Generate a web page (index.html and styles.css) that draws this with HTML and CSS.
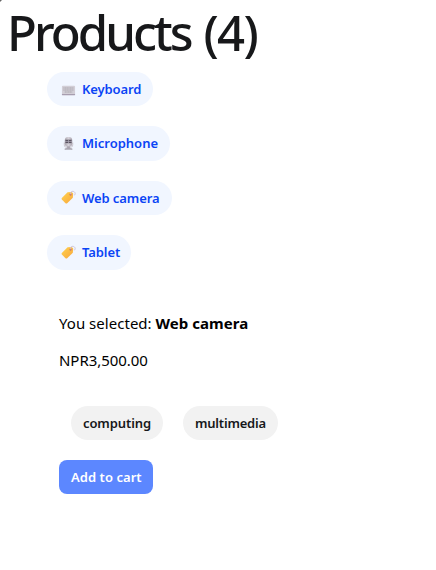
FILE: index.html
```
<!DOCTYPE html>
<html lang="en">
<head>
<meta charset="utf-8">
<title>Products</title>
<link rel="stylesheet" href="styles.css">
</head>
<body>
<span class="corner"></span>
<svg class="defs" width="0" height="0" aria-hidden="true">
  <defs>
    <linearGradient id="gold" x1="0" y1="0" x2="1" y2="1"><stop offset="0" stop-color="#ffd34f"/><stop offset="1" stop-color="#f8a63c"/></linearGradient>
    <linearGradient id="silver" x1="0" y1="0" x2="1" y2="0"><stop offset="0" stop-color="#aaa5ae"/><stop offset=".5" stop-color="#d5d1d9"/><stop offset="1" stop-color="#aaa4af"/></linearGradient>
    <symbol id="tag" viewBox="0 0 16 16">
      <path d="M7 2.4 11.4 2.1 13 3.8 12.6 8.2 6.6 14.2Q5.7 14.9 4.8 14.1L.9 10.2Q.2 9.3 .9 8.5Z" fill="url(#gold)"/>
      <circle cx="10.2" cy="4.9" r="1.2" fill="#c4706a"/>
      <path d="M10.4 4.6C9.8 2.3 11.2 1.1 12.8 1.4 15.4 1.8 16 4.8 13.8 5.7" fill="none" stroke="#cdc3d9" stroke-width="1"/>
    </symbol>
  </defs>
</svg>
<h1>Products <span class="count">(4)</span></h1>
<ul class="products">
  <li><button class="pill keyboard"><svg class="icon" viewBox="0 0 16 16"><rect x="1" y="4" width="14" height="10" rx="1" fill="#d2ced6"/><path d="M1 13.5h14" stroke="#9b8fa5"/><path d="M2.5 6.5h11M2.5 8.5h11M4 10.7h8" stroke="#aaa6ad" stroke-width="1.1" stroke-dasharray="1.4 .35"/></svg><span>Keyboard</span></button></li>
  <li><button class="pill microphone"><svg class="icon" viewBox="0 0 16 16"><path d="M3.5 7v2.5q0 3 4.5 3t4.5-3V7" fill="none" stroke="#c7c2cc"/><rect x="4" y="1" width="8" height="10.8" rx="3.7" fill="url(#silver)"/><path d="M4.7 4h6.6v3.6H4.7z" fill="#5b5562"/><path d="M4.2 5.8h7.6M8 3.5V8" stroke="#aaa4b1" stroke-width=".8"/><path d="M8 11v3" stroke="#aaa5b0" stroke-width="3"/><path d="M4 14q4-2 8 0z" fill="#aaa5b0" stroke="#aaa5b0" stroke-width="1"/></svg><span class="label">Microphone</span></button></li>
  <li><button class="pill camera"><svg class="icon"><use href="#tag"/></svg><span>Web camera</span></button></li>
  <li><button class="pill tablet"><svg class="icon"><use href="#tag"/></svg><span>Tablet</span></button></li>
</ul>
<section class="details">
  <p class="selected">You selected: <strong>Web camera</strong></p>
  <p class="price">NPR3,500.00</p>
  <div class="tags"><span class="tag computing">computing</span><span class="tag multimedia">multimedia</span></div>
  <button class="cart">Add to cart</button>
</section>
</body>
</html>
```
FILE: styles.css
```
* { box-sizing: border-box; }
body {
  margin: 0;
  padding: 0 8px;
  background: #fff;
  color: #000;
  font: 15px/21px "Noto Sans", "Open Sans", sans-serif;
}
.defs { position: absolute; }
.corner {
  position: absolute;
  top: 0;
  left: 0;
  width: 2px;
  height: 2px;
  background: #666;
  clip-path: polygon(0 0, 100% 0, 0 100%);
}
h1 {
  margin: 0 0 0 -1px;
  height: 72px;
  font-size: 49px;
  line-height: 65px;
  font-weight: 500;
  letter-spacing: -2.95px;
  word-spacing: 3px;
  color: #17181a;
  white-space: nowrap;
}
.count { letter-spacing: -1.7px; }
.products {
  display: flex;
  flex-direction: column;
  gap: 20px;
  margin: 0;
  padding: 0 0 0 39px;
  list-style: none;
}
.products li { display: flex; }
button { border: 0; font-family: inherit; }
.pill {
  display: flex;
  align-items: center;
  gap: 6px;
  height: 34.4px;
  padding: 0 0 0 14px;
  border-radius: 18px;
  background: #f1f6ff;
  color: #0b44f5;
  font-size: 13px;
  line-height: 20px;
  font-weight: 600;
  letter-spacing: -0.1px;
  white-space: nowrap;
}
.icon { width: 15px; height: 15px; flex: none; }
.label { margin-top: -1px; }
.keyboard { width: 106px; }
.microphone { width: 123px; letter-spacing: 0; }
.camera { width: 125px; letter-spacing: -0.1px; }
.tablet { width: 84px; letter-spacing: -0.1px; }
.details { padding: 43.4px 0 0 51px; }
.details p { margin: 0 0 16px; white-space: nowrap; }
.selected { letter-spacing: 0.03px; }
.price { letter-spacing: -0.05px; }
.tags { display: flex; gap: 20px; padding: 19px 0 0 12px; }
.tag {
  height: 34px;
  padding-left: 12px;
  border-radius: 17px;
  background: #f2f2f2;
  color: #17181a;
  font-size: 13px;
  line-height: 34px;
  font-weight: 600;
  letter-spacing: -0.1px;
}
.computing { width: 92px; }
.multimedia { width: 95px; letter-spacing: -0.2px; }
.cart {
  display: block;
  width: 94px;
  height: 34px;
  margin-top: 20px;
  padding: 0 0 0 12px;
  border-radius: 8px;
  background: #5c87ff;
  color: #fff;
  font-size: 13px;
  line-height: 34px;
  font-weight: 600;
  letter-spacing: 0.05px;
  text-align: left;
  white-space: nowrap;
}
```
